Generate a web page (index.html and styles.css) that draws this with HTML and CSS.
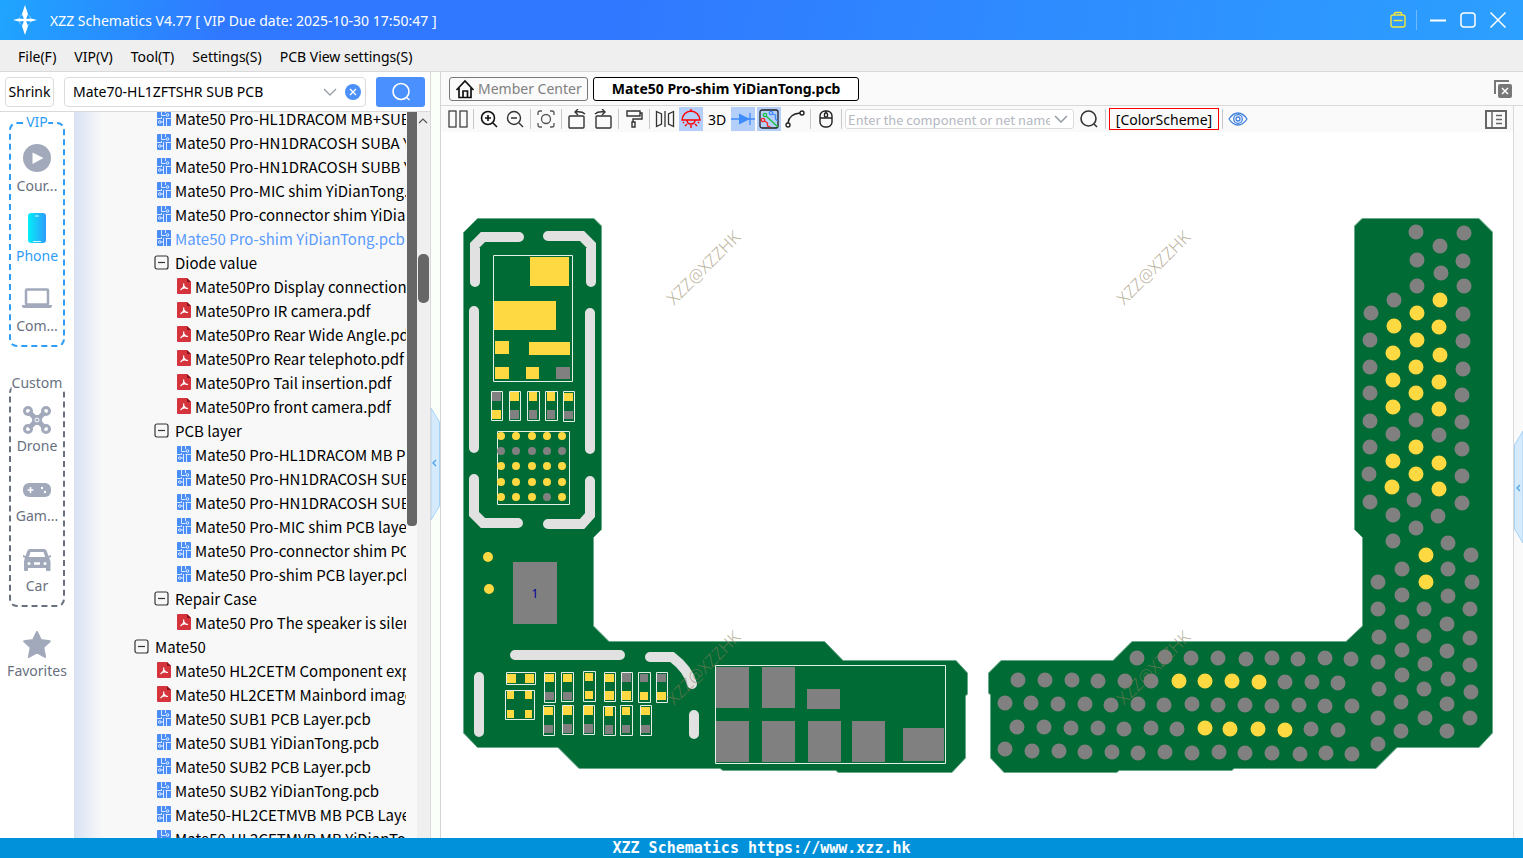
FILE: index.html
```html
<!DOCTYPE html>
<html lang="en">

<head>
  <meta charset="UTF-8">
  <meta name="viewport" content="width=device-width, initial-scale=1.0">
  <title>XZZ Schematics</title>
  <link rel="stylesheet" href="styles.css">
</head>

<body>
  <!-- shared icons -->
  <svg class="defs" width="0" height="0">
    <symbol id="pcb" viewBox="0 0 14 16">
      <rect width="14" height="16" rx="1" fill="#4a8df8" />
      <path d="M4.500 0v5.500h4M0 8.500h4.500V7M8.500 8.500H14M6.500 16V8M9.500 8.500V16M3.500 12h3M8.500 0v3" fill="none" stroke="#fff" stroke-width=".8" />
      <circle cx="10.500" cy="5" r="1.300" fill="#4a8df8" stroke="#fff" stroke-width=".8" />
      <circle cx="2.800" cy="12" r="1.300" fill="#4a8df8" stroke="#fff" stroke-width=".8" />
    </symbol>
    <symbol id="pdf" viewBox="0 0 14 16">
      <path d="M1 0h9l4 4v11q0 1-1 1H1q-1 0-1-1V1q0-1 1-1z" fill="#d5343c" />
      <path d="M10 0l4 4h-4z" fill="#8c1118" />
      <path d="M6.500 5.500c.8 2-.2 4.500-3 6.500M7 8c.6 1.600 2 2.500 4 2.500M5 10.500c1.500-.7 3-.8 4.500-.5" fill="none" stroke="#fff" stroke-width="1.200" />
    </symbol>
    <symbol id="minus" viewBox="0 0 15 15">
      <rect x="1" y="1" width="13" height="13" rx="2" fill="none" stroke="#333" stroke-width="1.200" />
      <path d="M4 7.500h7" stroke="#333" stroke-width="1.200" />
    </symbol>
  </svg>

  <header class="titlebar">
    <svg class="logo" viewBox="0 0 24 30">
      <circle cx="12" cy="15" r="6" fill="none" stroke="#8fd0ff" stroke-dasharray="3 1.500" />
      <path d="M12 0l3 9-2 5h-2l-2-5zM12 30l3-9-2-5h-2l-2 5zM0 15l6-1.500 5 .5v2l-5 .5zM24 15l-6-1.500-5 .5v2l5 .5z" fill="#fff" />
      <circle cx="12" cy="15" r="2" fill="#fff" />
    </svg>
    <h1 class="title">XZZ Schematics V4.77 [ VIP Due date: 2025-10-30 17:50:47 ]</h1>
    <div class="window-buttons">
      <button aria-label="VIP"><svg width="18" height="18" fill="none" stroke="#f2e63c" stroke-width="1.400"><rect x="2" y="4" width="14" height="12" rx="2" /><path d="M5.500 4V2.500q0-1 1-1h5q1 0 1 1V4M4.500 9.500h9" /></svg></button>
      <span class="bar"></span>
      <button aria-label="Minimize"><svg width="18" height="18"><path d="M1 9.500h16" stroke="#fff" stroke-width="2" /></svg></button>
      <button aria-label="Maximize"><svg width="18" height="18"><rect x="2" y="2" width="14" height="14" rx="3" fill="none" stroke="#fff" stroke-width="1.500" /></svg></button>
      <button aria-label="Close"><svg width="18" height="18"><path d="M1.500 1.500l15 15M16.500 1.500l-15 15" stroke="#fff" stroke-width="1.500" /></svg></button>
    </div>
  </header>

  <nav class="menubar">
    <a href="#">File(F)</a>
    <a href="#">VIP(V)</a>
    <a href="#">Tool(T)</a>
    <a href="#">Settings(S)</a>
    <a href="#">PCB View settings(S)</a>
  </nav>

  <main class="main">
    <aside class="sidebar">
      <div class="search-row">
        <button class="shrink">Shrink</button>
        <div class="combo">
          <input type="text" aria-label="Search files" value="Mate70-HL1ZFTSHR SUB PCB">
          <button aria-label="Show history"><svg width="14" height="8"><path d="M1 1l6 6 6-6" fill="none" stroke="#999fa8" stroke-width="1.400" /></svg></button>
          <button aria-label="Clear"><svg width="16" height="16"><circle cx="8" cy="8" r="8" fill="#4a90f8" /><path d="M5 5l6 6M11 5l-6 6" stroke="#fff" stroke-width="1.400" /></svg></button>
        </div>
        <button class="search-btn" aria-label="Search"><svg width="20" height="20" fill="none" stroke="#fff" stroke-width="1.600"><circle cx="10" cy="9.500" r="8" /><path d="M15.500 15.500l3 2.500" /></svg></button>
      </div>

      <div class="sidebar-body">
        <div class="rail">
          <section class="group vip">
            <h2>VIP</h2>
            <a href="#"><svg width="28" height="28"><circle cx="14" cy="14" r="14" fill="#a1a9bb" /><path d="M9.500 8.500l11 5.500-11 6z" fill="#fff" /></svg>Cour...</a>
            <a href="#" class="active"><svg width="18" height="30"><defs><linearGradient id="phone"><stop stop-color="#05eef8" /><stop offset="1" stop-color="#2d9bfb" /></linearGradient></defs><rect width="18" height="30" rx="3" fill="url(#phone)" /><path d="M7 3h4M5 28.500h8" stroke="#d8f4ff" stroke-width="1.200" /></svg>Phone</a>
            <a href="#"><svg width="30" height="20"><rect x="4" y="1.500" width="22" height="15" rx="1" fill="none" stroke="#a1a9bb" stroke-width="2.500" /><path d="M0 17h30v1q0 2-2 2H2q-2 0-2-2z" fill="#a1a9bb" /></svg>Com...</a>
          </section>
          <section class="group custom">
            <h2>Custom</h2>
            <a href="#"><svg width="30" height="30" fill="none" stroke="#a1a9bb"><path d="M7 7l16 16M23 7L7 23" stroke-width="5" /><circle cx="15" cy="15" r="4.500" fill="#a1a9bb" /><circle cx="15" cy="15" r="2" stroke="#fff" /><g stroke-width="3"><circle cx="6" cy="6" r="3.500" /><circle cx="24" cy="6" r="3.500" /><circle cx="6" cy="24" r="3.500" /><circle cx="24" cy="24" r="3.500" /></g></svg>Drone</a>
            <a href="#"><svg width="28" height="14"><rect width="28" height="14" rx="6" fill="#a1a9bb" /><path d="M4.500 7h6M7.500 4v6" stroke="#fff" stroke-width="1.600" /><circle cx="19" cy="5" r="1.200" fill="#fff" /><circle cx="22" cy="9" r="1.200" fill="#fff" /></svg>Gam...</a>
            <a href="#"><svg width="28" height="24"><path d="M7 1h14q2 0 2.500 1.500L25.500 8l2.500-1v2l-2 1q1.500 1.500 1.500 4v8q0 1-1 1h-2.500q-1 0-1-1v-2H5v2q0 1-1 1H2q-1 0-1-1v-8q0-2.500 1-4L0 9V7l2.500 1 2-5.500Q5 1 7 1z" fill="#a1a9bb" /><path d="M7.500 4h13l1.700 5H5.800z" fill="#fff" /><circle cx="6" cy="15.500" r="1.500" fill="#fff" /><circle cx="22" cy="15.500" r="1.500" fill="#fff" /><path d="M11 15.500h6" stroke="#fff" stroke-width="2.500" /></svg>Car</a>
          </section>
          <a href="#" class="favorites"><svg width="28" height="28"><path d="M14 1l3.800 8 9 1.200-6.500 6.200 1.800 9.600-8.100-4.500L5.900 26l1.800-9.600L1.200 10.200l9-1.200z" fill="#a1a9bb" stroke="#a1a9bb" stroke-width="2" stroke-linejoin="round" /></svg>Favorites</a>
        </div>

        <div class="tree">
          <ul>
            <li class="l1"><a href="#"><svg class="file"><use href="#pcb" /></svg>Mate50 Pro-HL1DRACOM MB+SUB YiDianTong.pcb</a></li>
            <li class="l1"><a href="#"><svg class="file"><use href="#pcb" /></svg>Mate50 Pro-HN1DRACOSH SUBA YiDianTong.pcb</a></li>
            <li class="l1"><a href="#"><svg class="file"><use href="#pcb" /></svg>Mate50 Pro-HN1DRACOSH SUBB YiDianTong.pcb</a></li>
            <li class="l1"><a href="#"><svg class="file"><use href="#pcb" /></svg>Mate50 Pro-MIC shim YiDianTong.pcb</a></li>
            <li class="l1"><a href="#"><svg class="file"><use href="#pcb" /></svg>Mate50 Pro-connector shim YiDianTong.pcb</a></li>
            <li class="l1"><a href="#" class="current"><svg class="file"><use href="#pcb" /></svg>Mate50 Pro-shim YiDianTong.pcb</a></li>
            <li class="l1"><a href="#"><svg class="fold"><use href="#minus" /></svg>Diode value</a></li>
            <li class="l2"><a href="#"><svg class="file"><use href="#pdf" /></svg>Mate50Pro Display connection.pdf</a></li>
            <li class="l2"><a href="#"><svg class="file"><use href="#pdf" /></svg>Mate50Pro IR camera.pdf</a></li>
            <li class="l2"><a href="#"><svg class="file"><use href="#pdf" /></svg>Mate50Pro Rear Wide Angle.pdf</a></li>
            <li class="l2"><a href="#"><svg class="file"><use href="#pdf" /></svg>Mate50Pro Rear telephoto.pdf</a></li>
            <li class="l2"><a href="#"><svg class="file"><use href="#pdf" /></svg>Mate50Pro Tail insertion.pdf</a></li>
            <li class="l2"><a href="#"><svg class="file"><use href="#pdf" /></svg>Mate50Pro front camera.pdf</a></li>
            <li class="l1"><a href="#"><svg class="fold"><use href="#minus" /></svg>PCB layer</a></li>
            <li class="l2"><a href="#"><svg class="file"><use href="#pcb" /></svg>Mate50 Pro-HL1DRACOM MB PCB layer.pcb</a></li>
            <li class="l2"><a href="#"><svg class="file"><use href="#pcb" /></svg>Mate50 Pro-HN1DRACOSH SUBA PCB layer.pcb</a></li>
            <li class="l2"><a href="#"><svg class="file"><use href="#pcb" /></svg>Mate50 Pro-HN1DRACOSH SUBB PCB layer.pcb</a></li>
            <li class="l2"><a href="#"><svg class="file"><use href="#pcb" /></svg>Mate50 Pro-MIC shim PCB layer.pcb</a></li>
            <li class="l2"><a href="#"><svg class="file"><use href="#pcb" /></svg>Mate50 Pro-connector shim PCB layer.pcb</a></li>
            <li class="l2"><a href="#"><svg class="file"><use href="#pcb" /></svg>Mate50 Pro-shim PCB layer.pcb</a></li>
            <li class="l1"><a href="#"><svg class="fold"><use href="#minus" /></svg>Repair Case</a></li>
            <li class="l2"><a href="#"><svg class="file"><use href="#pdf" /></svg>Mate50 Pro The speaker is silent.pdf</a></li>
            <li class="l0"><a href="#"><svg class="fold"><use href="#minus" /></svg>Mate50</a></li>
            <li class="l1"><a href="#"><svg class="file"><use href="#pdf" /></svg>Mate50 HL2CETM Component explain.pdf</a></li>
            <li class="l1"><a href="#"><svg class="file"><use href="#pdf" /></svg>Mate50 HL2CETM Mainbord image.pdf</a></li>
            <li class="l1"><a href="#"><svg class="file"><use href="#pcb" /></svg>Mate50 SUB1 PCB Layer.pcb</a></li>
            <li class="l1"><a href="#"><svg class="file"><use href="#pcb" /></svg>Mate50 SUB1 YiDianTong.pcb</a></li>
            <li class="l1"><a href="#"><svg class="file"><use href="#pcb" /></svg>Mate50 SUB2 PCB Layer.pcb</a></li>
            <li class="l1"><a href="#"><svg class="file"><use href="#pcb" /></svg>Mate50 SUB2 YiDianTong.pcb</a></li>
            <li class="l1"><a href="#"><svg class="file"><use href="#pcb" /></svg>Mate50-HL2CETMVB MB PCB Layer.pcb</a></li>
            <li class="l1"><a href="#"><svg class="file"><use href="#pcb" /></svg>Mate50-HL2CETMVB MB YiDianTong.pcb</a></li>
          </ul>
        </div>
        <div class="scroll-inner"><div class="thumb"></div></div>
        <div class="scroll-outer">
          <svg width="10" height="6"><path d="M1 5l4-4 4 4" fill="none" stroke="#555" stroke-width="1.200" /></svg>
          <div class="thumb"></div>
        </div>
      </div>
    </aside>

    <div class="splitter">
      <svg width="9" height="112"><path d="M0 0l8.500 14v84L0 112z" fill="#d6eafd" stroke="#a5d2f7" /><path d="M5 52l-3 3 3 3" fill="none" stroke="#4aa3ee" stroke-width="1.300" /></svg>
    </div>

    <section class="workspace">
      <div class="tabs">
        <button class="tab member"><svg width="20" height="20" fill="none" stroke="#111" stroke-width="1.700"><path d="M1.500 11L10 2l8.500 9M4 9v9.500h12V9M8 18v-6h4.500v6" /></svg>Member Center</button>
        <button class="tab selected">Mate50 Pro-shim YiDianTong.pcb</button>
        <button class="close-all" aria-label="Close all tabs"><svg width="18" height="18"><path d="M1 14V1h14" fill="none" stroke="#777" stroke-width="2" /><rect x="4" y="4" width="14" height="14" rx="2" fill="#777" /><path d="M8 8l6 6M14 8l-6 6" stroke="#fff" stroke-width="1.500" /></svg></button>
      </div>

      <div class="workspace-body">
        <div class="viewer">
          <div class="toolbar">
            <button aria-label="Split view"><svg width="20" height="18" fill="none" stroke="#333" stroke-width="1.200"><rect x="1" y="1" width="7" height="16" /><rect x="12" y="1" width="7" height="16" /></svg></button>
            <span class="sep"></span>
            <button aria-label="Zoom in"><svg width="18" height="18" fill="none" stroke="#111" stroke-width="1.600"><circle cx="8" cy="8" r="6.500" /><path d="M13 13l4 4M5 8h6M8 5v6" /></svg></button>
            <button aria-label="Zoom out"><svg width="18" height="18" fill="none" stroke="#333" stroke-width="1.400"><circle cx="8" cy="8" r="6.500" /><path d="M13 13l4 4M5 8h6" /></svg></button>
            <span class="sep"></span>
            <button aria-label="Fit"><svg width="18" height="18" fill="none" stroke="#555" stroke-width="1.300"><circle cx="9" cy="9" r="4.500" /><path d="M1 5V3q0-2 2-2h2M13 1h2q2 0 2 2v2M17 13v2q0 2-2 2h-2M5 17H3q-2 0-2-2v-2" /></svg></button>
            <span class="sep"></span>
            <button aria-label="Rotate left"><svg width="20" height="20" fill="none" stroke="#333" stroke-width="1.400"><rect x="2" y="7" width="15" height="12" rx="1" /><path d="M18 5q-3-3-10-2M11 0L8 3l3 3" /></svg></button>
            <button aria-label="Rotate right"><svg width="20" height="20" fill="none" stroke="#333" stroke-width="1.400"><rect x="3" y="7" width="15" height="12" rx="1" /><path d="M2 5q3-3 10-2M9 0l3 3-3 3" /></svg></button>
            <span class="sep"></span>
            <button aria-label="Paint"><svg width="18" height="18" fill="none" stroke="#333" stroke-width="1.400"><path d="M2 1h13v5H2zM15 3h2v6H8v3M7 12h3v5H7z" /></svg></button>
            <span class="sep"></span>
            <button aria-label="Mirror"><svg width="20" height="18" fill="none" stroke="#333" stroke-width="1.300"><path d="M10 1v16M1.500 1.500L6.500 4v10l-5 2.500zM18.500 1.500L13.500 4v10l5 2.500z" /></svg></button>
            <button class="on" aria-label="Light"><svg width="20" height="20" fill="none" stroke="#f00" stroke-width="1.400"><path d="M1 11q1-8 9-9 8 1 9 9zM10 0v2M6 11q0 4 4 4t4-4M10 16v3M6 15l-2 2M14 15l2 2M3 13l-1 1M17 13l1 1" /></svg></button>
            <button>3D</button>
            <button class="on" aria-label="Diode"><svg width="24" height="14"><path d="M0 7h24M19 1v12" stroke="#3f8cff" stroke-width="1.300" /><path d="M8 1.500L19 7 8 12.500z" fill="#3f8cff" /></svg></button>
            <button class="on" aria-label="Net lines"><svg width="20" height="20" fill="none" stroke-width="1.300"><rect x="1" y="1" width="18" height="18" rx="2" stroke="#222" /><path d="M7 7l12 11" stroke="#17c23c" /><circle cx="6" cy="6" r="1.700" stroke="#17c23c" /><circle cx="12" cy="4" r="1.700" stroke="#3f8cff" /><path d="M13.500 5l3 1v4l2 2" stroke="#3f8cff" /><circle cx="4" cy="11" r="1.700" stroke="#f22" /><path d="M5.500 12l3 2v3l3 1" stroke="#f22" /></svg></button>
            <button aria-label="Curve"><svg width="20" height="18" fill="none" stroke="#222" stroke-width="1.400"><circle cx="3" cy="15" r="2" /><circle cx="17" cy="3" r="2" /><path d="M3 13Q4 4 15 3" /></svg></button>
            <span class="sep"></span>
            <button aria-label="Mouse"><svg width="14" height="18" fill="none" stroke="#222" stroke-width="1.400"><rect x="1" y="1" width="12" height="16" rx="5" /><path d="M1 8h12M7 1v2" /><rect x="5.500" y="3" width="3" height="4" rx="1" /></svg></button>
            <span class="sep"></span>
            <div class="net-combo">
              <input type="text" aria-label="Component or net name" placeholder="Enter the component or net name to search">
              <svg width="14" height="8"><path d="M1 1l6 6 6-6" fill="none" stroke="#999fa8" stroke-width="1.600" /></svg>
            </div>
            <button class="find" aria-label="Find"><svg width="20" height="20" fill="none" stroke="#333" stroke-width="1.600"><circle cx="9.500" cy="9.500" r="7.500" /><path d="M15 15l3 3" /></svg></button>
            <span class="sep"></span>
            <button class="scheme">[ColorScheme]</button>
            <span class="sep"></span>
            <button aria-label="Show"><svg width="20" height="14" fill="none" stroke="#3f80e0" stroke-width="1.300"><path d="M1 7q4-6 9-6t9 6q-4 6-9 6T1 7z" /><circle cx="10" cy="7" r="4.300" /><circle cx="10" cy="7" r="2" /></svg></button>
            <button class="panel-btn" aria-label="Panel"><svg width="22" height="19" fill="none" stroke="#666" stroke-width="2"><rect x="1" y="1" width="20" height="17" /><path d="M7 1v17" stroke-width="1.500" /><path d="M11 5.500h6M11 9.500h6M11 13.500h6" stroke-width="1.500" /></svg></button>
          </div>

          <svg class="board" viewBox="441 132 1072 706">
            <!-- board outlines -->
            <g class="outline">
              <path d="M463.500 232.500L477.500 218.500H594L601.500 226V529.500L593.500 537.500V626L609 641.500H824.500L843 660.500H956L967.500 673V694L965.500 696V758L952 772.500H838L836 770.500H723L720 768.500H579L558 747.500H477.500L463.500 733Z" />
              <path d="M1354.500 226L1362 218.500H1479L1492.500 232V733L1479 747.500H1397L1376 768.500H1234L1232 770.500H1119L1117 772.500H1004L990.500 758V695L988.500 693V673L1001 660.500H1113L1132 641.500H1346L1362.500 626V537.500L1354.500 529.500Z" />
            </g>

            <!-- shield frame -->
            <path class="frame" d="M475 282V245L483 237H519M548 236H582L591 245V282M474 311V448M590 313V449M474 479V514L483 523H518M590 481V515L582 524H548M515 655H620M650 657H672Q688 669 692 684M479 677V732M694 715V734" />

            <!-- pads -->
            <path class="pad" d="M530 257h39v29h-39zM494 301h62v29h-62zM495 341h14v13h-14zM529 342h41v13h-41zM495 367h14v12h-14zM526 367h13v12h-13z
              M492 410h9v9h-9zM510 392h9v9h-9zM529 392h8v9h-8zM547 392h8v9h-8zM564 393h9v8h-9z
              M507 674h9v9h-9zM525 674h9v9h-9zM507 691h7v8h-7zM525 691h7v8h-7zM507 710h7v8h-7zM525 710h7v8h-7z
              M545 674h9v8h-9zM563 674h9v8h-9zM585 673h8v8h-8zM585 691h8v8h-8zM605 674h9v8h-9zM605 691h9v9h-9zM622 691h9v9h-9zM640 692h8v8h-8zM657 692h9v8h-9z
              M544 707h9v8h-9zM563 706h9v9h-9zM584 706h9v9h-9zM605 707h8v9h-8zM622 707h8v8h-8zM641 707h9v8h-9z" />
            <path class="pad nc" d="M556 367h14v12h-14zM492 392h9v9h-9zM510 410h9v9h-9zM529 410h8v9h-8zM547 410h8v9h-8zM564 411h9v8h-9zM513 562h44v62h-44z
              M545 692h9v8h-9zM563 692h9v8h-9zM622 673h9v9h-9zM640 674h8v8h-8zM657 674h9v8h-9z
              M544 725h9v8h-9zM563 724h9v9h-9zM584 724h9v9h-9zM605 725h8v9h-8zM622 725h8v8h-8zM641 725h9v8h-9z
              M716 667h33v41h-33zM762 667h33v41h-33zM807 689h33v20h-33zM716 721h33v41h-33zM762 721h33v41h-33zM808 721h33v41h-33zM852 721h33v41h-33zM903 728h41v33h-41z" />

            <!-- component bodies -->
            <path class="body" d="M493.500 255.500h79v126h-79zM491.500 391.500h11v29h-11zM509.500 391.500h11v29h-11zM527.500 391.500h12v29h-12zM545.500 391.500h12v29h-12zM563.500 391.500h11v30h-11zM497.500 431.500h72v73h-72z
              M506.500 672.500h29v12h-29zM505.500 690.500h29v29h-29z
              M544.500 672.500h11v30h-11zM561.500 672.500h12v29h-12zM583.500 671.500h12v30h-12zM604.500 672.500h11v29h-11zM621.500 672.500h11v29h-11zM638.500 672.500h12v30h-12zM656.500 672.500h11v30h-11z
              M543.500 705.500h11v30h-11zM562.500 705.500h11v29h-11zM583.500 705.500h11v29h-11zM603.500 706.500h12v29h-12zM620.500 705.500h12v30h-12zM640.500 705.500h11v30h-11z
              M715.500 665.500h230v98h-230z" />

            <!-- bga -->
            <path class="ball" d="M501 436h0M516 436h0M532 436h0M547 436h0M562 436h0M501 466h0M516 466h0M532 466h0M547 466h0M562 466h0M501 482h0M516 482h0M532 482h0M547 482h0M562 482h0M501 497h0M516 497h0M532 497h0M562 497h0" />
            <path class="ball nc" d="M501 451h0M516 451h0M532 451h0M547 451h0M562 451h0M547 497h0" />
            <path class="ball point" d="M488 557h0M489 589h0" />
            <text class="pin" x="535" y="598">1</text>

            <!-- test points, right board -->
            <path class="dot nc" d="M1416 232h0M1464 233h0M1440 246h0M1417 260h0M1463 261h0M1441 273h0M1417 286h0M1464 286h0M1394 300h0M1371 313h0M1463 314h0M1370 340h0M1463 341h0M1370 367h0M1463 369h0M1370 393h0M1462 395h0M1370 421h0M1416 420h0M1462 422h0M1393 434h0M1439 435h0M1370 447h0M1462 449h0M1369 474h0M1462 476h0M1370 502h0M1414 500h0M1462 503h0M1393 515h0M1438 516h0M1416 528h0
              M1393 541h0M1448 543h0M1471 555h0M1402 569h0M1448 569h0M1378 582h0M1472 582h0M1402 595h0M1448 596h0M1378 609h0M1424 609h0M1470 609h0M1402 622h0M1447 624h0M1379 637h0M1424 636h0M1470 638h0M1402 650h0M1447 651h0M1378 662h0M1425 664h0M1470 665h0M1402 675h0M1448 679h0M1379 689h0M1424 689h0M1471 692h0M1401 702h0M1447 704h0M1378 718h0M1425 718h0M1470 718h0M1401 731h0M1447 731h0M1378 744h0
              M1137 658h0M1165 657h0M1191 658h0M1218 658h0M1246 659h0M1272 658h0M1298 659h0M1325 658h0M1351 659h0
              M1018 680h0M1045 680h0M1072 680h0M1098 681h0M1125 681h0M1151 681h0M1285 682h0M1312 682h0M1338 683h0
              M1005 703h0M1031 703h0M1058 704h0M1085 704h0M1111 705h0M1138 704h0M1164 705h0M1192 704h0M1218 705h0M1245 705h0M1272 706h0M1299 705h0M1325 706h0M1352 706h0
              M1017 727h0M1044 727h0M1071 728h0M1098 728h0M1124 729h0M1151 728h0M1177 729h0M1311 729h0M1338 730h0
              M1005 749h0M1032 751h0M1059 751h0M1085 752h0M1112 752h0M1138 753h0M1165 752h0M1192 753h0M1219 752h0M1245 753h0M1272 753h0M1300 754h0M1326 753h0M1352 754h0" />
            <path class="dot" d="M1440 300h0M1417 313h0M1394 326h0M1439 327h0M1417 340h0M1393 353h0M1440 355h0M1416 367h0M1393 380h0M1439 382h0M1416 393h0M1393 407h0M1439 409h0M1416 447h0M1393 461h0M1439 463h0M1416 474h0M1392 487h0M1439 489h0M1426 555h0M1426 582h0
              M1179 681h0M1205 681h0M1232 681h0M1259 682h0M1205 728h0M1230 729h0M1258 729h0M1285 730h0" />

            <g class="watermark">
              <text transform="translate(708 272) rotate(-45)">XZZ@XZZHK</text>
              <text transform="translate(1158 272) rotate(-45)">XZZ@XZZHK</text>
              <text transform="translate(708 672) rotate(-45)">XZZ@XZZHK</text>
              <text transform="translate(1158 672) rotate(-45)">XZZ@XZZHK</text>
            </g>
          </svg>
        </div>

        <div class="right-strip">
          <svg width="9" height="112"><path d="M9 0L.5 14v84L9 112z" fill="#d6eafd" stroke="#a5d2f7" /><path d="M6 54l-3 3 3 3" fill="none" stroke="#4aa3ee" stroke-width="1.300" /></svg>
        </div>
      </div>
    </section>
  </main>

  <footer class="statusbar">XZZ Schematics https://www.xzz.hk</footer>
</body>

</html>
```

FILE: styles.css
```css
* {
  box-sizing: border-box;
  margin: 0;
  padding: 0;
}

body {
  display: flex;
  flex-direction: column;
  height: 100vh;
  overflow: hidden;
  background-color: #ffffff;
  color: #000000;
  font-family: "Noto Sans", "Noto Sans CJK SC", sans-serif;
  font-size: 14px;
}

a {
  color: inherit;
  text-decoration: none;
}

button,
input {
  font: inherit;
  color: inherit;
  border: none;
  background: none;
}

button {
  display: flex;
  align-items: center;
  justify-content: center;
  cursor: pointer;
}

svg {
  display: block;
  flex-shrink: 0;
}

.defs {
  position: absolute;
}

/* title bar */
.titlebar {
  display: flex;
  align-items: center;
  flex-shrink: 0;
  height: 40px;
  padding: 0 16px 0 13px;
  background: linear-gradient(100deg, #1fa5ff 0%, #3078ff 15%, #3078ff 40%, #2ca0ff 100%);
  color: #ffffff;
}

.logo {
  width: 24px;
  height: 30px;
}

.title {
  margin-left: 13px;
  font-size: 14px;
  font-weight: 400;
}

.window-buttons {
  display: flex;
  align-items: center;
  gap: 12px;
  margin-left: auto;
}

.window-buttons .bar {
  width: 1px;
  height: 20px;
  margin-left: -3px;
  background-color: #6db8ff;
}

/* menu */
.menubar {
  display: flex;
  align-items: center;
  flex-shrink: 0;
  gap: 18px;
  height: 32px;
  padding: 1px 0 0 18px;
  background-color: #efefef;
  border-bottom: 1px solid #d9d9d9;
}

.main {
  display: flex;
  flex: 1;
  min-height: 0;
}

/* sidebar */
.sidebar {
  display: flex;
  flex-direction: column;
  flex-shrink: 0;
  width: 431px;
  border-right: 1px solid #d9d9d9;
}

.search-row {
  display: flex;
  align-items: center;
  flex-shrink: 0;
  gap: 10px;
  height: 40px;
  padding: 0 5px;
  border-bottom: 1px solid #d9d9d9;
}

.shrink {
  width: 49px;
  height: 30px;
  border: 1px solid #dcdcdc;
  border-radius: 4px;
}

.combo {
  display: flex;
  align-items: center;
  flex: 1;
  gap: 8px;
  height: 30px;
  padding: 0 4px 0 8px;
  border: 1px solid #dcdcdc;
  border-radius: 4px;
}

.combo input {
  flex: 1;
  min-width: 0;
}

.search-btn {
  width: 49px;
  height: 30px;
  border-radius: 3px;
  background-color: #4a90ff;
}

.sidebar-body {
  display: flex;
  flex: 1;
  min-height: 0;
  overflow: hidden;
  background-color: #f8f8f8;
}

.rail {
  flex-shrink: 0;
  width: 74px;
  padding: 10px 0 0;
  background-color: #ffffff;
  color: #68707f;
}

.rail a {
  display: flex;
  flex-direction: column;
  align-items: center;
  justify-content: flex-end;
  height: 52px;
  line-height: 20px;
}

.rail a svg {
  margin: auto;
}

.group {
  position: relative;
  display: flex;
  flex-direction: column;
  gap: 18px;
  margin: 0 9px;
  padding: 17px 0 9px;
  border: 2px dashed #68707f;
  border-radius: 8px;
}

.group h2 {
  position: absolute;
  top: -12px;
  left: 50%;
  transform: translateX(-50%);
  background-color: #ffffff;
  font-size: 14px;
  font-weight: 400;
  line-height: 20px;
}

.vip {
  gap: 14px;
  padding-top: 16px;
  border-color: #2f9df5;
}

.vip a {
  height: 56px;
}

.vip h2,
.rail .active {
  color: #2f9df5;
}

.custom {
  margin-top: 38px;
  margin-bottom: 22px;
}

.custom h2 {
  top: -14px;
}

/* file tree */
.tree {
  flex: 1;
  min-width: 0;
  overflow: hidden;
  background: linear-gradient(90deg, #d8e2f3 0, #f8f8f8 28px);
  font-family: "Noto Sans CJK SC", sans-serif;
  font-size: 15px;
}

.tree ul {
  margin-top: -6px;
  list-style: none;
}

.tree a {
  display: flex;
  align-items: center;
  height: 24px;
  white-space: nowrap;
}

.tree .current {
  color: #5a9bff;
}

.l0 {
  padding-left: 60px;
}

.l1 {
  padding-left: 80px;
}

.l2 {
  padding-left: 100px;
}

.file {
  width: 14px;
  height: 16px;
  margin: 0 4px 0 3px;
}

.fold {
  width: 15px;
  height: 15px;
  margin-right: 6px;
}

.scroll-inner {
  width: 10px;
  margin-left: 1px;
}

.scroll-inner .thumb {
  height: 57%;
  border-radius: 0 0 4px 4px;
  background-color: #666666;
}

.scroll-outer {
  width: 13px;
  padding: 6px 1px 0;
  background-color: #efefef;
}

.scroll-outer .thumb {
  height: 49px;
  margin-top: 130px;
  border-radius: 5px;
  background-color: #666666;
}

.splitter {
  flex-shrink: 0;
  width: 9px;
  padding-top: 336px;
  background-color: #fafffa;
}

/* workspace */
.workspace {
  display: flex;
  flex-direction: column;
  flex: 1;
  min-width: 0;
  border-left: 1px solid #d5d5d5;
}

.tabs {
  display: flex;
  align-items: center;
  flex-shrink: 0;
  gap: 5px;
  height: 34px;
  padding: 0 11px 0 8px;
  background-color: #fafafa;
  border-bottom: 1px solid #d9d9d9;
}

.tab {
  height: 24px;
  border: 1px solid #777777;
  border-radius: 3px;
}

.member {
  gap: 3px;
  padding: 0 5px;
  color: #808080;
}

.selected {
  padding: 0 18px;
  border-color: #000000;
  background-color: #ffffff;
  font-weight: 700;
}

.close-all {
  margin-left: auto;
}

.workspace-body {
  display: flex;
  flex: 1;
  min-height: 0;
}

.viewer {
  display: flex;
  flex-direction: column;
  flex: 1;
  min-width: 0;
}

.toolbar {
  display: flex;
  align-items: center;
  flex-shrink: 0;
  gap: 2px;
  height: 26px;
  padding: 0 5px;
  background-color: #fafafa;
}

.toolbar button {
  width: 24px;
  height: 24px;
}

.toolbar .on {
  background-color: #b5cffb;
}

.sep {
  width: 1px;
  height: 20px;
  margin: 0 1px;
  background-color: #c8c8c8;
}

.net-combo {
  display: flex;
  align-items: center;
  width: 229px;
  height: 20px;
  padding: 0 5px 0 2px;
  gap: 4px;
  border: 1px solid #dcdcdc;
  border-radius: 3px;
  background-color: #ffffff;
}

.net-combo input {
  flex: 1;
  min-width: 0;
  font-family: "Noto Sans CJK SC", sans-serif;
  font-size: 13px;
}

.net-combo input::placeholder {
  color: #b4b8bf;
}

.toolbar .find {
  width: 26px;
}

.toolbar .scheme {
  width: 110px;
  height: 22px;
  border: 1px solid #ff0000;
}

.toolbar .panel-btn {
  margin-left: auto;
}

.right-strip {
  flex-shrink: 0;
  width: 10px;
  padding-top: 325px;
  background-color: #fafafa;
  border-left: 1px solid #d9d9d9;
}

/* board drawing */
.board {
  flex: 1;
  width: 100%;
  min-height: 0;
}

.outline {
  fill: #006b35;
  stroke: #6aa98a;
}

.frame {
  fill: none;
  stroke: #e1e1e1;
  stroke-width: 10;
  stroke-linecap: round;
}

.pad {
  fill: #ffd941;
}

.body {
  fill: none;
  stroke: #e6f0ea;
}

.ball,
.dot {
  fill: none;
  stroke: #ffd941;
  stroke-width: 8;
  stroke-linecap: round;
}

.point {
  stroke-width: 10;
}

.dot {
  stroke-width: 15;
}

.pad.nc {
  fill: #808080;
}

.ball.nc,
.dot.nc {
  stroke: #808080;
}

.pin {
  fill: #00009c;
  font-size: 12px;
  text-anchor: middle;
}

.watermark {
  fill: #8c7d5a;
  fill-opacity: 0.6;
  font-size: 17px;
  font-weight: 300;
  text-anchor: middle;
}

.statusbar {
  flex-shrink: 0;
  height: 20px;
  background-color: #0091da;
  color: #ffffff;
  font-family: "DejaVu Sans Mono", monospace;
  font-size: 15px;
  font-weight: 700;
  line-height: 20px;
  text-align: center;
}
```
